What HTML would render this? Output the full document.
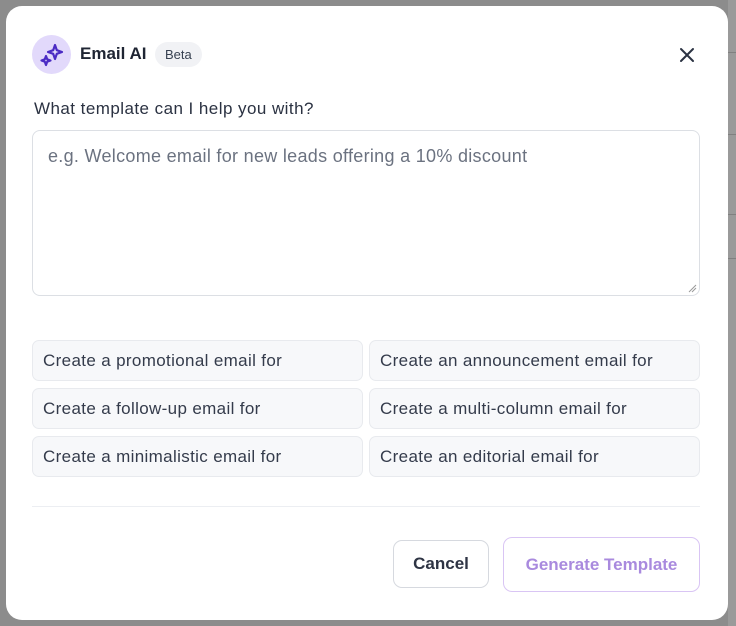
<!DOCTYPE html>
<html><head><style>
*{box-sizing:border-box;margin:0;padding:0}
body{width:736px;height:626px;background:#8c8c8c;position:relative;overflow:hidden;font-family:"Liberation Sans",sans-serif}
.bg{position:absolute;background:#9a9a9a}
.modal{position:absolute;left:6px;top:6px;width:722px;height:614px;background:#fff;border-radius:16px}
.ic{position:absolute;left:26px;top:29px;width:39px;height:39px;border-radius:50%;background:#e2d9fb}
.title{position:absolute;left:74px;top:38px;font-size:17px;font-weight:bold;color:#1f2533}
.beta{position:absolute;left:149px;top:36px;height:25px;padding:0 10px;border-radius:13px;background:#f1f2f5;font-size:13px;line-height:25px;color:#374151}
.x{position:absolute;left:672px;top:40px}
.lbl{position:absolute;left:28px;top:93px;font-size:17px;letter-spacing:.45px;color:#2b3242}
.ta{position:absolute;left:26px;top:124px;width:668px;height:166px;border:1px solid #dcdfe4;border-radius:8px;padding:15px 15px;font-size:18px;letter-spacing:.3px;color:#6b7280}
.chip{position:absolute;width:331px;height:41px;background:#f7f8fa;border:1px solid #e8eaee;border-radius:7px;padding-left:10px;line-height:39px;font-size:17px;letter-spacing:.35px;color:#343b4b}
.hr{position:absolute;left:26px;top:500px;width:668px;height:1px;background:#eceef2}
.cancel{position:absolute;left:387px;top:534px;width:96px;height:48px;border:1px solid #d6d9df;border-radius:9px;text-align:center;line-height:46px;font-weight:bold;font-size:17px;color:#2e3444}
.gen{position:absolute;left:497px;top:531px;width:197px;height:55px;border:1px solid #d9c5f4;border-radius:9px;text-align:center;line-height:53px;font-weight:bold;font-size:17px;color:#a98ade}
</style></head><body>
<div class="bg" style="left:728px;top:0;width:8px;height:626px"></div>
<div style="position:absolute;left:728px;top:52px;width:8px;height:1px;background:#808080"></div>
<div style="position:absolute;left:728px;top:134px;width:8px;height:1px;background:#808080"></div>
<div style="position:absolute;left:728px;top:214px;width:8px;height:1px;background:#808080"></div>
<div style="position:absolute;left:728px;top:258px;width:8px;height:1px;background:#808080"></div>
<div class="modal">
<div class="ic"><svg width="39" height="39" viewBox="0 0 39 39" fill="none" stroke="#4b2bc4" stroke-width="2.2" stroke-linejoin="round"><path d="M23 10 L24.8 15.2 L30 17 L24.8 18.8 L23 24 L21.2 18.8 L16 17 L21.2 15.2 Z"/><path d="M14 21 L15.2 24.3 L18.5 25.5 L15.2 26.7 L14 30 L12.8 26.7 L9.5 25.5 L12.8 24.3 Z"/></svg></div>
<div class="title">Email AI</div>
<div class="beta">Beta</div>
<svg class="x" width="18" height="18" viewBox="0 0 18 18" stroke="#2b3242" stroke-width="2" stroke-linecap="round"><path d="M3 3L15 15M15 3L3 15"/></svg>
<div class="lbl">What template can I help you with?</div>
<div class="ta">e.g. Welcome email for new leads offering a 10% discount
<svg style="position:absolute;right:2px;bottom:2px" width="9" height="9" stroke="#999"><path d="M1 8L8 1M4 8L8 4"/></svg></div>
<div class="chip" style="left:26px;top:334px">Create a promotional email for</div>
<div class="chip" style="left:363px;top:334px">Create an announcement email for</div>
<div class="chip" style="left:26px;top:382px">Create a follow-up email for</div>
<div class="chip" style="left:363px;top:382px">Create a multi-column email for</div>
<div class="chip" style="left:26px;top:430px">Create a minimalistic email for</div>
<div class="chip" style="left:363px;top:430px">Create an editorial email for</div>
<div class="hr"></div>
<div class="cancel">Cancel</div>
<div class="gen">Generate Template</div>
</div>
</body></html>
